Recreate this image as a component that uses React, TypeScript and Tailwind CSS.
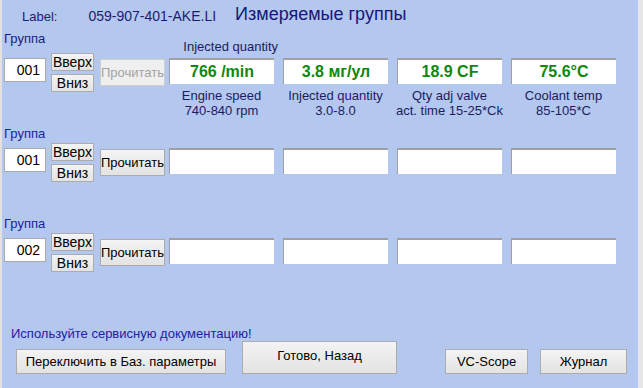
import React from "react";

const font = { fontFamily: '"Liberation Sans", Arial, sans-serif' };

const btn =
  "border border-[#acacac] bg-gradient-to-b from-[#f3f3f3] to-[#e3e3e3] text-black text-[13px] leading-none flex items-center justify-center whitespace-nowrap";

type Col = { value?: string; lines?: string[] };

function GroupRow({
  num,
  disabled,
  cols,
}: {
  num: string;
  disabled?: boolean;
  cols: Col[];
}) {
  return (
    <div className="flex items-start">
      <div className="ml-[2px] mt-[5px] flex h-[24px] w-[42px] items-center justify-end border border-[#a9a9a9] bg-white pr-[5px] text-[14px] text-black">
        {num}
      </div>
      <div className="ml-[5px] flex flex-col gap-[3px]">
        <button className={`${btn} h-[18px] w-[43px] text-[14px]`}>Вверх</button>
        <button className={`${btn} h-[18px] w-[43px] text-[14px]`}>Вниз</button>
      </div>
      <button
        className={
          disabled
            ? "ml-[6px] mt-[6px] flex h-[27px] w-[65px] items-center justify-center border border-[#cfcfcf] bg-[#efefef] text-[13px] text-[#a3a3a3]"
            : `${btn} ml-[6px] mt-[6px] h-[27px] w-[65px]`
        }
      >
        Прочитать
      </button>
      <div className="ml-[4px] mt-[5px] flex gap-[9px]">
        {cols.map((c, i) => (
          <div key={i} className="flex w-[105px] flex-col items-center">
            <div className="flex h-[26px] w-[105px] items-center justify-center border-l border-t-2 border-[#a0a0a0] bg-white text-[16px] font-bold text-[#0e880e]">
              {c.value}
            </div>
            {c.lines && (
              <div className="mt-[4px] text-center text-[13px] leading-[15px] whitespace-nowrap text-[#1c1c60]">
                {c.lines.map((l) => (
                  <div key={l}>{l}</div>
                ))}
              </div>
            )}
          </div>
        ))}
      </div>
    </div>
  );
}

export default function App() {
  return (
    <div className="flex h-[388px] w-[643px] overflow-hidden" style={font}>
      <div className="w-[2px] bg-[#e2e2e2]" />
      <div className="flex w-[636px] flex-col bg-[#b3c7ef]">
        <div className="flex h-[31px] items-center text-[#1c1c70]">
          <span className="ml-[20px] mt-[2px] text-[13px]">Label:</span>
          <span className="ml-[31px] mt-[2px] text-[14px]">059-907-401-AKE.LI</span>
          <span className="ml-[19px] mb-[3px] text-[18px] text-[#16167a]">Измеряемые группы</span>
        </div>

        <div className="flex h-[22px]">
          <span className="ml-[2px] text-[13px] leading-[15px] text-[#1c1c80]">Группа</span>
          <span className="ml-[133px] mt-[8px] w-[105px] text-center text-[13px] leading-[15px] whitespace-nowrap text-[#1c1c60]">
            Injected quantity
          </span>
        </div>
        <GroupRow
          num="001"
          disabled
          cols={[
            { value: "766 /min", lines: ["Engine speed", "740-840 rpm"] },
            { value: "3.8 мг/ул", lines: ["Injected quantity", "3.0-8.0"] },
            { value: "18.9 CF", lines: ["Qty adj valve", "act. time 15-25*Ck"] },
            { value: "75.6°C", lines: ["Coolant temp", "85-105*C"] },
          ]}
        />

        <div className="h-[25px] pt-[3px]">
          <span className="ml-[2px] text-[13px] leading-[15px] text-[#2222a0]">Группа</span>
        </div>
        <GroupRow num="001" cols={[{}, {}, {}, {}]} />

        <div className="h-[51px] pt-[29px]">
          <span className="ml-[2px] text-[13px] leading-[15px] text-[#2222a0]">Группа</span>
        </div>
        <GroupRow num="002" cols={[{}, {}, {}, {}]} />

        <div className="mt-[54px] ml-[9px] text-[13px] leading-[15px] text-[#2222a0]">
          Используйте сервисную документацию!
        </div>
        <div className="flex items-end">
          <button className={`${btn} ml-[14px] h-[25px] w-[210px]`}>
            Переключить в Баз. параметры
          </button>
          <button className={`${btn} ml-[16px] h-[33px] w-[155px] pb-[4px]`}>
            Готово, Назад
          </button>
          <button className={`${btn} ml-[48px] h-[25px] w-[83px]`}>VC-Scope</button>
          <button className={`${btn} ml-[12px] h-[25px] w-[87px]`}>Журнал</button>
        </div>
      </div>
      <div className="flex-1 bg-[#e6e6e6]" />
    </div>
  );
}
